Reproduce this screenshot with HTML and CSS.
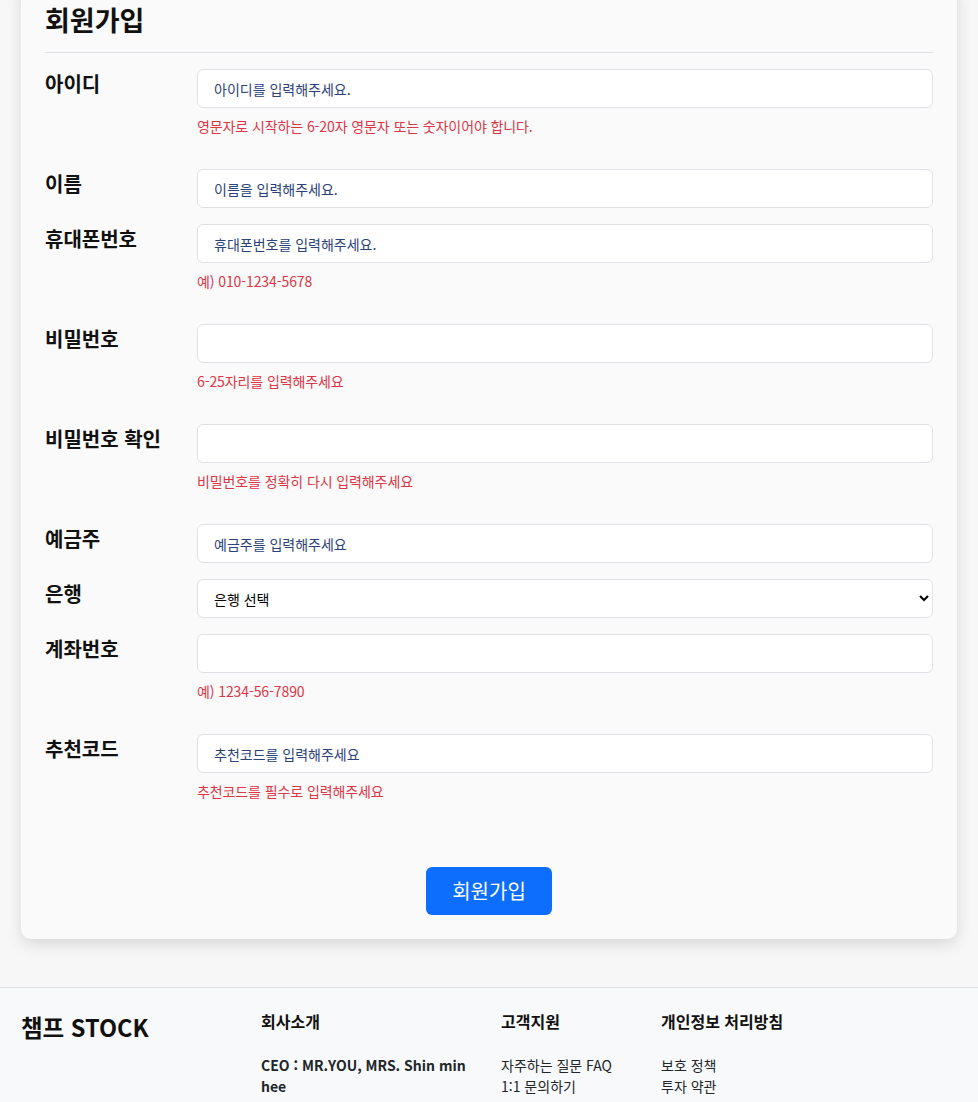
FILE: index.html
```html
<!DOCTYPE html>
<html lang="ko">
<head>
  <meta charset="UTF-8" />
  <meta name="viewport" content="width=device-width, initial-scale=1.0" />
  <title>회원가입 - 챔프 STOCK</title>
  <link rel="stylesheet" href="styles.css">
</head>
<body>
  <div class="card">
    <h2>회원가입</h2>
    <form id="joinForm">
      <div class="row">
        <label for="userId">아이디</label>
        <div class="field">
          <input type="text" id="userId" placeholder="아이디를 입력해주세요." />
          <p class="help">영문자로 시작하는 6-20자 영문자 또는 숫자이어야 합니다.</p>
        </div>
      </div>

      <div class="row">
        <label for="name">이름</label>
        <div class="field">
          <input type="text" id="name" placeholder="이름을 입력해주세요." />
        </div>
      </div>

      <div class="row">
        <label for="phone">휴대폰번호</label>
        <div class="field">
          <input type="text" id="phone" placeholder="휴대폰번호를 입력해주세요." />
          <p class="help">예) 010-1234-5678</p>
        </div>
      </div>

      <div class="row">
        <label for="pw">비밀번호</label>
        <div class="field">
          <input type="password" id="pw" />
          <p class="help">6-25자리를 입력해주세요</p>
        </div>
      </div>

      <div class="row">
        <label for="pw2">비밀번호 확인</label>
        <div class="field">
          <input type="password" id="pw2" />
          <p class="help">비밀번호를 정확히 다시 입력해주세요</p>
        </div>
      </div>

      <div class="row">
        <label for="holder">예금주</label>
        <div class="field">
          <input type="text" id="holder" placeholder="예금주를 입력해주세요" />
        </div>
      </div>

      <div class="row">
        <label for="bank">은행</label>
        <div class="field">
          <select id="bank">
            <option value="">은행 선택</option>
            <option value="kb">국민은행</option>
            <option value="shinhan">신한은행</option>
            <option value="woori">우리은행</option>
            <option value="hana">하나은행</option>
          </select>
        </div>
      </div>

      <div class="row">
        <label for="account">계좌번호</label>
        <div class="field">
          <input type="text" id="account" />
          <p class="help">예) 1234-56-7890</p>
        </div>
      </div>

      <div class="row">
        <label for="code">추천코드</label>
        <div class="field">
          <input type="text" id="code" placeholder="추천코드를 입력해주세요" />
          <p class="help">추천코드를 필수로 입력해주세요</p>
        </div>
      </div>

      <div class="actions">
        <button type="submit">회원가입</button>
      </div>
    </form>
  </div>

  <footer>
    <div class="footer-inner">
      <div class="brand">챔프 STOCK</div>
      <div class="col">
        <h5>회사소개</h5>
        <ul>
          <li class="strong">CEO : MR.YOU, MRS. Shin min hee</li>
        </ul>
      </div>
      <div class="col">
        <h5>고객지원</h5>
        <ul>
          <li>자주하는 질문 FAQ</li>
          <li>1:1 문의하기</li>
        </ul>
      </div>
      <div class="col">
        <h5>개인정보 처리방침</h5>
        <ul>
          <li>보호 정책</li>
          <li>투자 약관</li>
        </ul>
      </div>
    </div>
  </footer>
</body>
</html>
```

FILE: styles.css
```css
* {
  box-sizing: border-box;
}
body {
  margin: 0;
  font-family: "Noto Sans CJK KR", "Noto Sans", sans-serif;
  background-color: #f7f7f7;
  color: #212529;
}
.card {
  margin: -19px 21px 48px;
  background: #fafafa;
  padding: 24px 24px 24px;
  border-radius: 10px;
  box-shadow: 0 6px 16px rgba(0,0,0,0.12);
}
h2 {
  margin: 0;
  font-size: 27px;
  line-height: 30px;
  font-weight: 700;
  color: #111;
  padding-bottom: 17px;
  border-bottom: 1px solid #dee2e6;
  margin-bottom: 16px;
}
.row {
  display: flex;
  margin-bottom: 16px;
}
.row label {
  width: 152px;
  flex-shrink: 0;
  font-size: 20px;
  font-weight: 700;
  line-height: 30px;
  color: #111;
}
.field {
  flex: 1;
}
input, select {
  display: block;
  width: 100%;
  height: 39px;
  border: 1px solid #dee2e6;
  border-radius: 6px;
  background: #fff;
  font-family: inherit;
  font-size: 14px;
  color: #212529;
}
input {
  padding: 0 16px;
}
input::placeholder {
  color: #2a4278;
}
select {
  padding: 0 8px 0 12px;
  color: #000;
}
.help {
  margin: 8px 0 17px;
  font-size: 14px;
  letter-spacing: -0.1px;
  line-height: 20px;
  color: #dc3545;
}
.actions {
  text-align: center;
  margin-top: 49px;
}
button {
  padding: 10px 26px;
  border: none;
  background-color: #0d6efd;
  color: white;
  font-family: inherit;
  font-size: 20px;
  line-height: 28px;
  border-radius: 6px;
  cursor: pointer;
}
footer {
  background: #f8f9fa;
  border-top: 1px solid #dee2e6;
  padding: 22px 21px 24px;
}
.footer-inner {
  display: grid;
  grid-template-columns: 240px 240px 160px 1fr;
}
.brand {
  font-size: 23.5px;
  font-weight: 700;
  line-height: 34px;
  color: #111;
}
.col h5 {
  margin: 0 0 23px;
  font-size: 16px;
  line-height: 22px;
  font-weight: 700;
  color: #111;
}
.col ul {
  list-style: none;
  margin: 0;
  padding: 0 24px 0 0;
  font-size: 14px;
  line-height: 21px;
}
.col li.strong {
  font-weight: 700;
}
```
